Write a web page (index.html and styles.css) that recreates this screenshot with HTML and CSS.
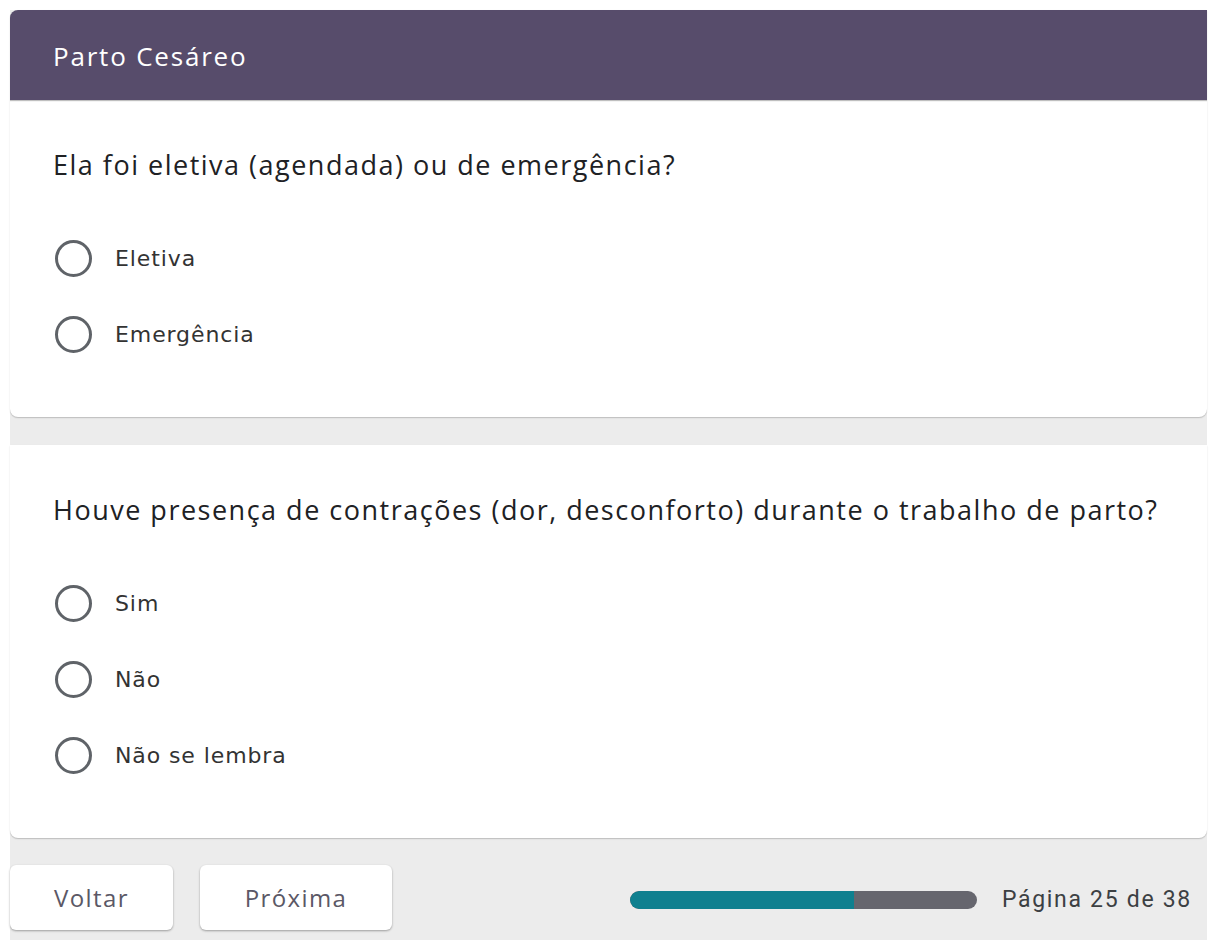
FILE: index.html
```html
<!DOCTYPE html>
<html lang="pt-BR">
<head>
<meta charset="utf-8">
<title>Parto Cesáreo</title>
<link rel="stylesheet" href="styles.css">
</head>
<body>
<main class="form">
  <section class="card card-first">
    <header class="section-head">Parto Cesáreo</header>
    <div class="question">
      <div class="question-title">Ela foi eletiva (agendada) ou de emergência?</div>
      <div class="options">
        <label class="option"><span class="radio"></span><span class="option-text">Eletiva</span></label>
        <label class="option"><span class="radio"></span><span class="option-text">Emergência</span></label>
      </div>
    </div>
  </section>

  <section class="card">
    <div class="question">
      <div class="question-title">Houve presença de contrações (dor, desconforto) durante o trabalho de parto?</div>
      <div class="options">
        <label class="option"><span class="radio"></span><span class="option-text">Sim</span></label>
        <label class="option"><span class="radio"></span><span class="option-text">Não</span></label>
        <label class="option"><span class="radio"></span><span class="option-text">Não se lembra</span></label>
      </div>
    </div>
  </section>

  <footer class="nav">
    <div class="nav-buttons">
      <button class="btn btn-back">Voltar</button>
      <button class="btn btn-next">Próxima</button>
    </div>
    <div class="progress">
      <div class="progress-track"><div class="progress-fill" style="width: 64.6%"></div></div>
      <span class="progress-label">Página 25 de 38</span>
    </div>
  </footer>
</main>
</body>
</html>
```

FILE: styles.css
```css
html, body {
  margin: 0;
  padding: 0;
  background: #ffffff;
}

body {
  font-family: "Open Sans", Roboto, "Liberation Sans", sans-serif;
  color: #202124;
}

.form {
  margin: 10px 3px 0 10px;
  height: 930px;
  background: #ececec;
  display: flex;
  flex-direction: column;
  gap: 28px;
}

.card {
  background: #ffffff;
  border-radius: 0 0 8px 8px;
  box-shadow: 0 1px 1px rgba(0, 0, 0, 0.14), 0 1px 2px rgba(0, 0, 0, 0.08);
}

.card-first {
  border-radius: 8px 0 8px 8px;
  overflow: hidden;
}

.section-head {
  height: 90px;
  background: #574c6b;
  color: #ffffff;
  font-family: "Open Sans", Roboto, sans-serif;
  font-size: 26px;
  letter-spacing: 1.8px;
  padding: 2px 43px 0;
  display: flex;
  align-items: center;
  box-sizing: border-box;
  box-shadow: 0 1px 1px rgba(0, 0, 0, 0.25);
}

.question {
  padding: 49px 43px 45px;
}

.question-title {
  font-size: 27px;
  line-height: 32px;
  letter-spacing: 1.5px;
  color: #202124;
}

.options {
  margin-top: 39px;
  display: flex;
  flex-direction: column;
}

.option {
  height: 76px;
  display: flex;
  align-items: center;
  gap: 23px;
}

.radio {
  width: 37px;
  height: 37px;
  box-sizing: border-box;
  border: 3px solid #5f6368;
  border-radius: 50%;
  margin-left: 2px;
  flex: none;
}

.option-text {
  font-family: "DejaVu Sans", Roboto, sans-serif;
  font-size: 22px;
  letter-spacing: 0.9px;
  color: #333333;
}

.nav {
  display: flex;
  align-items: center;
  justify-content: space-between;
  padding: 0 15px 10px 0;
  margin-top: -1px;
}

.nav-buttons {
  display: flex;
  gap: 27px;
}

.btn {
  height: 65px;
  border: none;
  border-radius: 6px;
  background: #ffffff;
  box-shadow: 0 1px 2px rgba(0, 0, 0, 0.25), 0 1px 3px rgba(0, 0, 0, 0.1);
  font-family: "Open Sans", Roboto, sans-serif;
  font-size: 24px;
  font-weight: 500;
  letter-spacing: 1.4px;
  color: #5b5866;
  padding: 0;
}

.btn-back {
  width: 163px;
}

.btn-next {
  width: 192px;
}

.progress {
  display: flex;
  align-items: center;
  gap: 25px;
  margin-top: 4px;
}

.progress-track {
  width: 347px;
  height: 18px;
  border-radius: 9px;
  background: #66666e;
  overflow: hidden;
}

.progress-fill {
  height: 100%;
  background: #0f808f;
  border-radius: 9px 0 0 9px;
}

.progress-label {
  font-family: Roboto, "Liberation Sans", sans-serif;
  font-size: 23px;
  letter-spacing: 1.7px;
  color: #3c4043;
}
```
